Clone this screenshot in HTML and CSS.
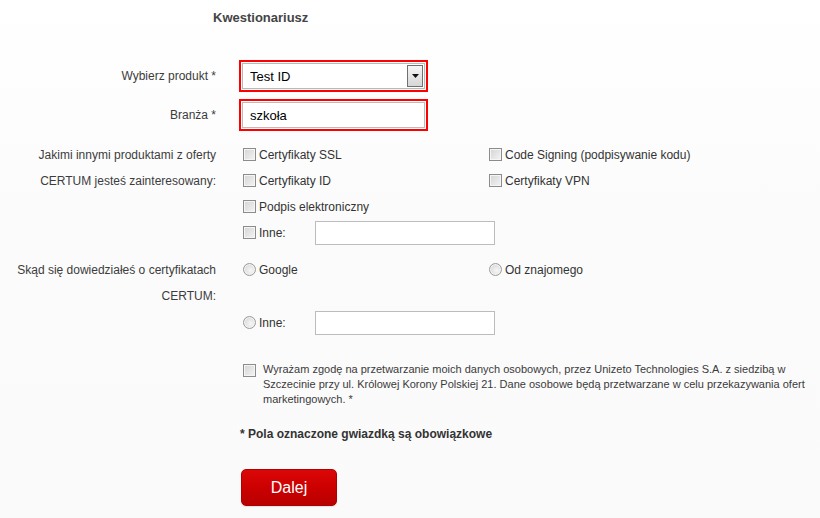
FILE: index.html
```html
<!DOCTYPE html>
<html lang="pl">
<head>
    <meta charset="UTF-8">
    <title>Kwestionariusz</title>
    <link rel="stylesheet" href="styles.css">
</head>
<body>
    <div class="page">
        <h2 class="title">Kwestionariusz</h2>

        <form class="survey">
            <div class="row row-main">
                <label class="lbl">Wybierz produkt *</label>
                <div class="req">
                    <div class="select-box">
                        <select class="sel">
                            <option>Test ID</option>
                        </select>
                        <span class="arrow">
                            <svg width="7" height="4" viewBox="0 0 7 4"><path d="M0 0H7L3.5 4Z" fill="#111"/></svg>
                        </span>
                    </div>
                </div>
            </div>

            <div class="row row-main row-branza">
                <label class="lbl">Branża *</label>
                <div class="req">
                    <input class="txt txt-wide" type="text" value="szkoła">
                </div>
            </div>

            <div class="row row-group">
                <div class="lbl lbl-multi">Jakimi innymi produktami z oferty<br>CERTUM jesteś zainteresowany:</div>
                <div class="options">
                    <label class="opt"><input type="checkbox" class="cb"> Certyfikaty SSL</label>
                    <label class="opt"><input type="checkbox" class="cb"> Code Signing (podpisywanie kodu)</label>
                    <label class="opt"><input type="checkbox" class="cb"> Certyfikaty ID</label>
                    <label class="opt"><input type="checkbox" class="cb"> Certyfikaty VPN</label>
                    <label class="opt"><input type="checkbox" class="cb"> Podpis elektroniczny</label>
                    <span></span>
                    <div class="opt opt-other">
                        <label class="opt"><input type="checkbox" class="cb"> Inne:</label>
                        <input class="txt txt-other" type="text">
                    </div>
                </div>
            </div>

            <div class="row row-group row-radio">
                <div class="lbl lbl-multi">Skąd się dowiedziałeś o certyfikatach<br>CERTUM:</div>
                <div class="options">
                    <label class="opt"><input type="radio" name="src" class="rb"> Google</label>
                    <label class="opt"><input type="radio" name="src" class="rb"> Od znajomego</label>
                    <div class="opt opt-other opt-gap">
                        <label class="opt"><input type="radio" name="src" class="rb"> Inne:</label>
                        <input class="txt txt-other" type="text">
                    </div>
                </div>
            </div>

            <div class="row row-consent">
                <span></span>
                <label class="consent">
                    <input type="checkbox" class="cb">
                    <span>Wyrażam zgodę na przetwarzanie moich danych osobowych, przez Unizeto Technologies S.A. z siedzibą w Szczecinie przy ul. Królowej Korony Polskiej 21. Dane osobowe będą przetwarzane w celu przekazywania ofert marketingowych. *</span>
                </label>
            </div>

            <div class="row row-note">
                <span></span>
                <p class="note">* Pola oznaczone gwiazdką są obowiązkowe</p>
            </div>

            <div class="row row-submit">
                <span></span>
                <div><button type="button" class="btn-next">Dalej</button></div>
            </div>
        </form>
    </div>
</body>
</html>
```

FILE: styles.css
```css
html, body { margin: 0; padding: 0; }
body {
    font-family: "Liberation Sans", Arial, sans-serif;
    font-size: 12px;
    color: #3a3a3a;
    background: linear-gradient(#ffffff 0, #fbfbfb 220px, #fafafa 100%);
    min-height: 518px;
}
.page { width: 820px; }
.title { margin: 0; padding: 10px 0 0 213px; font-size: 13px; line-height: 16px; font-weight: bold; color: #444; }

.row { display: grid; grid-template-columns: 216px 1fr; column-gap: 27px; }
.lbl { text-align: right; color: #3c3c3c; }
.row-main { align-items: center; margin-top: 34px; }
.row-branza { margin-top: 7px; }

/* red "required" frame */
.req { margin-left: -4px; width: 183px; border: 2px solid #f00; padding: 1px; }
.select-box { display: flex; border: 1px solid #b9b9b9; background: #fff; height: 24px; }
.sel {
    flex: 1;
    appearance: none;
    -webkit-appearance: none;
    border: none;
    background: transparent;
    font-family: inherit;
    font-size: 13px;
    color: #000;
    padding: 0 0 0 7px;
    outline: none;
}
.arrow {
    width: 16px;
    margin: 1px;
    border: 1px solid #707070;
    background: linear-gradient(#f6f6f6, #d6d6d6);
    display: flex;
    align-items: center;
    justify-content: center;
    box-sizing: border-box;
}

.txt {
    border: 1px solid #bcbcbc;
    background: #fff;
    height: 24px;
    box-sizing: border-box;
    font-family: inherit;
    font-size: 13px;
    color: #000;
    padding: 0 7px;
    outline: none;
}
.txt-wide { width: 100%; display: block; height: 26px; }
.txt-other { width: 180px; margin-left: 29px; }

.row-group { margin-top: 11px; line-height: 26px; }
.options { display: grid; grid-template-columns: 246px 246px; }
.opt { display: flex; align-items: center; color: #333; }
.opt-other { grid-column: 1 / 3; height: 26px; }
.opt-gap { margin-top: 27px; }

.cb, .rb {
    appearance: none;
    -webkit-appearance: none;
    width: 13px;
    height: 13px;
    margin: 0 3px 2px 0;
    border: 1px solid #8c8c8c;
    box-shadow: inset 0 0 0 1px #f5f5f5;
    background: linear-gradient(135deg, #d4d4d4, #f4f4f4);
    box-sizing: border-box;
    flex: none;
}
.rb { border-radius: 50%; border-color: #9a9a9a; background: radial-gradient(circle at 60% 60%, #f7f7f7, #cfcfcf); }

.row-consent { margin-top: 26px; }
.consent { display: flex; align-items: flex-start; font-size: 11px; line-height: 15px; color: #3a3a3a; }
.consent .cb { margin: 2px 7px 0 0; }
.consent span { width: 556px; }

.row-note { margin-top: 19px; }
.note { margin: 0 0 0 -3px; font-weight: bold; font-size: 12px; line-height: 16px; color: #333; }

.row-submit { margin-top: 27px; }
.btn-next {
    margin-left: -2px;
    width: 96px;
    height: 37px;
    border: 1px solid #b00000;
    border-radius: 5px;
    background: linear-gradient(#dc0707 0, #cc0000 50%, #b80000 100%);
    color: #fff;
    font-family: inherit;
    font-size: 16px;
    cursor: pointer;
    box-shadow: 0 1px 1px rgba(0,0,0,0.1);
}
.btn-next:hover { background: #b00000; }
```
